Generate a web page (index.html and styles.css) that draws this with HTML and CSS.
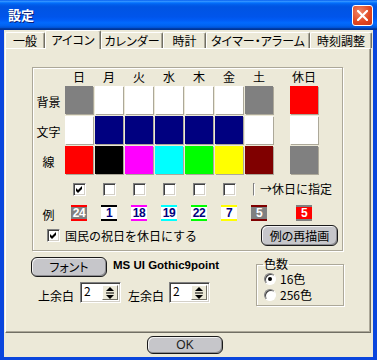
FILE: index.html
```html
<!DOCTYPE html>
<html lang="ja">
<head>
<meta charset="UTF-8">
<title>設定</title>
<link rel="stylesheet" href="styles.css">
</head>
<body>
<div class="window">
  <div class="titlebar">
    <span class="title">設定</span>
    <span class="close">
      <svg width="11" height="11" viewBox="0 0 11 11"><path d="M1 1 L10 10 M10 1 L1 10" stroke="#fff" stroke-width="2.2" stroke-linecap="square"/></svg>
    </span>
  </div>
  <div class="client">
    <div class="tabs">
      <div class="tab" style="width:40px">一般</div>
      <div class="tab active" style="width:56px">アイコン</div>
      <div class="tab" style="width:62px">カレンダー</div>
      <div class="tab" style="width:43px">時計</div>
      <div class="tab" style="width:104px">タイマー・アラーム</div>
      <div class="tab" style="width:62px">時刻調整</div>
    </div>
    <div class="panel">
      <div class="group colors">
        <div class="grid">
          <span></span>
          <span class="hd">日</span><span class="hd">月</span><span class="hd">火</span><span class="hd">水</span>
          <span class="hd">木</span><span class="hd">金</span><span class="hd">土</span>
          <span></span><span class="hd">休日</span>

          <span class="lbl">背景</span>
          <span class="cell gray"></span><span class="cell white"></span><span class="cell white"></span><span class="cell white"></span>
          <span class="cell white"></span><span class="cell white"></span><span class="cell gray"></span>
          <span></span><span class="cell red"></span>

          <span class="lbl">文字</span>
          <span class="cell white"></span><span class="cell navy"></span><span class="cell navy"></span><span class="cell navy"></span>
          <span class="cell navy"></span><span class="cell navy"></span><span class="cell white"></span>
          <span></span><span class="cell white"></span>

          <span class="lbl">線</span>
          <span class="cell red"></span><span class="cell black"></span><span class="cell magenta"></span><span class="cell cyan"></span>
          <span class="cell lime"></span><span class="cell yellow"></span><span class="cell maroon"></span>
          <span></span><span class="cell gray"></span>

          <span></span>
          <span class="check on"><svg width="11" height="11" viewBox="0 0 11 11"><polygon points="2,4 4,6 8,2 8,5 4,9 2,7" fill="#000"/></svg></span>
          <span class="check"></span><span class="check"></span><span class="check"></span>
          <span class="check"></span><span class="check"></span>
          <span class="sat"><span class="check"></span><span class="note">→休日に指定</span></span>

          <span class="lbl">例</span>
          <span class="sample s-sun">24</span>
          <span class="sample s-mon">1</span>
          <span class="sample s-tue">18</span>
          <span class="sample s-wed">19</span>
          <span class="sample s-thu">22</span>
          <span class="sample s-fri">7</span>
          <span class="sample s-sat">5</span>
          <span></span>
          <span class="sample s-hol">5</span>
        </div>
        <div class="holiday-row">
          <span class="check on"><svg width="11" height="11" viewBox="0 0 11 11"><polygon points="2,4 4,6 8,2 8,5 4,9 2,7" fill="#000"/></svg></span>
          <span class="holiday-text">国民の祝日を休日にする</span>
          <button class="btn redraw">例の再描画</button>
        </div>
      </div>

      <div class="lower">
        <div class="left">
          <div class="font-row">
            <button class="btn font-btn">フォント</button>
            <span class="font-name">MS UI Gothic9point</span>
          </div>
          <div class="margin-row">
            <span class="mlabel">上余白</span>
            <span class="spin">
              <span class="spin-val">2</span>
              <span class="spin-btn"><svg width="12" height="14" viewBox="0 0 12 14"><polygon points="6,1 10,5 2,5" fill="#000"/><rect x="2" y="6.5" width="8" height="1" fill="#000"/><polygon points="2,9 10,9 6,13" fill="#000"/></svg></span>
            </span>
            <span class="mlabel second">左余白</span>
            <span class="spin">
              <span class="spin-val">2</span>
              <span class="spin-btn"><svg width="12" height="14" viewBox="0 0 12 14"><polygon points="6,1 10,5 2,5" fill="#000"/><rect x="2" y="6.5" width="8" height="1" fill="#000"/><polygon points="2,9 10,9 6,13" fill="#000"/></svg></span>
            </span>
          </div>
        </div>
        <fieldset class="group depth">
          <legend>色数</legend>
          <div class="radio-row"><span class="radio on"></span><span>16色</span></div>
          <div class="radio-row"><span class="radio"></span><span>256色</span></div>
        </fieldset>
      </div>
    </div>
    <div class="footer">
      <button class="btn ok">OK</button>
    </div>
  </div>
</div>
</body>
</html>
```
FILE: styles.css
```css
body {
  margin: 0;
  font-family: "Noto Sans CJK JP", sans-serif;
  font-size: 12px;
  color: #000;
}
.window {
  width: 377px;
  height: 360px;
  background: #0a46dd;
  display: flex;
  flex-direction: column;
}
.titlebar {
  height: 30px;
  display: flex;
  align-items: center;
  justify-content: space-between;
  padding: 0 4px 0 8px;
  background: linear-gradient(to bottom, #0058ee 0%, #3593ff 4%, #288eff 6%, #127dff 8%, #036ffc 10%, #0262ee 14%, #0057e5 20%, #0054e3 24%, #0055eb 56%, #005bf5 66%, #026afe 76%, #0062ef 86%, #0052d6 92%, #0040ab 94%, #003092 100%);
}
.title {
  color: #fff;
  font-weight: bold;
  font-size: 13px;
  line-height: 16px;
  text-shadow: 1px 1px 0 #0a1e7a;
}
.close {
  width: 21px;
  height: 21px;
  box-sizing: border-box;
  border: 1px solid #fff;
  border-radius: 3px;
  background: radial-gradient(circle at 35% 30%, #f0876a, #e0451f 60%, #c8341a);
  display: flex;
  align-items: center;
  justify-content: center;
}
.client {
  flex: 1;
  margin: 0 4px 3px 4px;
  background: #ece9d8;
  display: flex;
  flex-direction: column;
}

/* tabs */
.tabs {
  height: 18px;
  display: flex;
  align-items: flex-end;
  padding-left: 1px;
}
.tab {
  height: 16px;
  box-sizing: border-box;
  border-top: 1px solid #fff;
  border-left: 1px solid #fff;
  border-right: 1px solid #716f64;
  box-shadow: inset -1px 0 0 #aca899;
  border-radius: 2px 2px 0 0;
  text-align: center;
  line-height: 15px;
  font-feature-settings: "palt";
  white-space: nowrap;
}
.tab.active {
  height: 19px;
  margin-bottom: -1px;
  position: relative;
  z-index: 1;
  background: #ece9d8;
  line-height: 17px;
}

.panel {
  margin-left: 1px;
  width: 366px;
  height: 285px;
  box-sizing: border-box;
  border: 1px solid;
  border-color: #fff #716f64 #716f64 #fff;
  box-shadow: inset -1px -1px 0 #aca899;
}

/* colour group */
.group {
  box-sizing: border-box;
  border: 1px solid #aca899;
  box-shadow: inset 1px 1px 0 #fff, 1px 1px 0 #fff;
}
.colors {
  margin: 18px 0 0 26px;
  width: 311px;
  height: 184px;
  padding: 1px 0 0 1px;
}
.grid {
  display: grid;
  grid-template-columns: 29px repeat(7, 28px) 13px 28px;
  grid-template-rows: 15px 28px 28px 28px 26px 18px;
  column-gap: 2px;
  row-gap: 2px;
  justify-items: center;
  align-items: center;
}
.hd {
  line-height: 15px;
  align-self: end;
}
.lbl {
  line-height: 14px;
  margin-top: 4px;
}
.cell {
  width: 28px;
  height: 28px;
  box-shadow: 1px 1px 0 #aca899;
}
.gray { background: #808080; }
.white { background: #fff; }
.red { background: #ff0000; }
.navy { background: #000080; }
.black { background: #000; }
.magenta { background: #ff00ff; }
.cyan { background: #00ffff; }
.lime { background: #00ff00; }
.yellow { background: #ffff00; }
.maroon { background: #800000; }

.check {
  width: 13px;
  height: 13px;
  box-sizing: border-box;
  border: 1px solid;
  border-color: #808080 #fff #fff #808080;
  box-shadow: inset 1px 1px 0 #404040, inset -1px -1px 0 #d4d0c8;
  background: #fff;
  display: flex;
  align-items: center;
  justify-content: center;
}
.sat {
  grid-column: 8 / -1;
  justify-self: stretch;
  display: flex;
  align-items: center;
  padding-left: 8px;
}
.note {
  margin-left: 5px;
  line-height: 14px;
  white-space: nowrap;
}

.sample {
  width: 16px;
  height: 16px;
  box-sizing: border-box;
  border-top: 2px solid;
  border-bottom: 2px solid;
  font-family: "Liberation Sans", sans-serif;
  font-weight: bold;
  font-size: 12px;
  line-height: 12px;
  text-align: center;
  letter-spacing: -0.5px;
}
.s-sun { background: #808080; color: #fff; border-color: #ff0000; }
.s-mon { background: #fff; color: #000080; border-color: #000; }
.s-tue { background: #fff; color: #000080; border-color: #ff00ff; }
.s-wed { background: #fff; color: #000080; border-color: #00ffff; }
.s-thu { background: #fff; color: #000080; border-color: #00ff00; }
.s-fri { background: #fff; color: #000080; border-color: #ffff00; }
.s-sat { background: #808080; color: #fff; border-color: #800000; }
.s-hol { background: #ff0000; color: #fff; border-color: #808080; }

.holiday-row {
  display: flex;
  align-items: center;
  height: 21px;
  margin-top: 3px;
}
.holiday-row .check {
  margin-left: 13px;
}
.holiday-text {
  margin-left: 5px;
  line-height: 14px;
}

/* buttons */
.btn {
  font-family: "Noto Sans CJK JP", sans-serif;
  font-size: 12px;
  color: #000;
  padding: 0;
  box-sizing: border-box;
  border: 1px solid #1a1a1a;
  border-radius: 6px;
  background: #c6c6ca;
  box-shadow: inset 1px 1px 0 #f2f2f2, inset -1px -1px 0 #8c8c90;
  line-height: 16px;
  font-feature-settings: "palt";
}
.redraw {
  margin-left: auto;
  margin-right: 4px;
  width: 77px;
  height: 21px;
}

/* lower part */
.lower {
  display: flex;
  align-items: flex-start;
}
.left {
  margin-left: 25px;
}
.font-row {
  margin-top: 6px;
  display: flex;
  align-items: center;
}
.font-btn {
  width: 76px;
  height: 20px;
}
.font-name {
  margin-left: 6px;
  font-family: "Liberation Sans", sans-serif;
  font-weight: bold;
  font-size: 11.5px;
  margin-top: -4px;
}
.margin-row {
  margin-top: 5px;
  display: flex;
  align-items: center;
  height: 21px;
}
.mlabel {
  margin-left: 7px;
  margin-top: 6px;
  line-height: 14px;
}
.mlabel.second {
  margin-left: 7px;
}
.spin {
  margin-left: 6px;
  width: 41px;
  height: 21px;
  box-sizing: border-box;
  border: 1px solid;
  border-color: #808080 #fff #fff #808080;
  box-shadow: inset 1px 1px 0 #404040, inset -1px -1px 0 #d4d0c8;
  background: #fff;
  display: flex;
  padding: 2px;
}
.margin-row .spin:last-child {
  margin-left: 5px;
}
.spin-val {
  flex: 1;
  line-height: 12px;
  padding-left: 1px;
}
.spin-btn {
  width: 16px;
  box-sizing: border-box;
  background: #ece9d8;
  border: 1px solid;
  border-color: #fff #716f64 #716f64 #fff;
  display: flex;
  align-items: center;
  justify-content: center;
}

.depth {
  margin: 7px 26px 0 auto;
  width: 88px;
  height: 48px;
  padding: 1px 0 0 7px;
  min-inline-size: 0;
}
.depth legend {
  padding: 0 1px;
  margin-left: -1px;
  line-height: 12px;
}
.radio-row {
  height: 16px;
  display: flex;
  align-items: center;
  line-height: 14px;
}
.radio {
  width: 12px;
  height: 12px;
  box-sizing: border-box;
  border-radius: 50%;
  border: 1px solid;
  border-color: #808080 #fff #fff #808080;
  box-shadow: inset 1px 1px 0 #404040;
  background: #fff;
  margin-right: 4px;
  display: flex;
  align-items: center;
  justify-content: center;
}
.radio.on::after {
  content: "";
  width: 4px;
  height: 4px;
  border-radius: 50%;
  background: #000;
}

.footer {
  flex: 1;
}
.ok {
  margin: 3px 0 0 143px;
  width: 76px;
  height: 18px;
  display: block;
  font-family: "Liberation Sans", sans-serif;
  color: #222;
}
```
